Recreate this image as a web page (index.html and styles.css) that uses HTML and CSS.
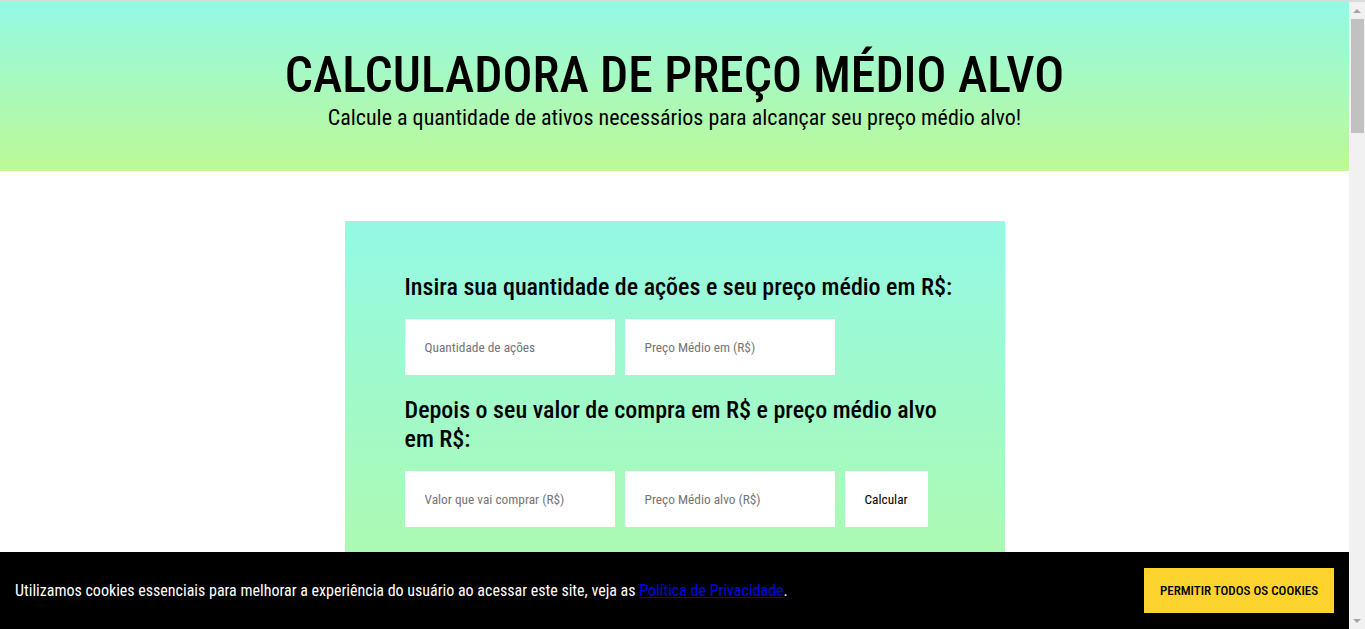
FILE: index.html
```
<!DOCTYPE html>
<html lang="pt-BR">
<head>
<meta charset="utf-8">
<title>Calculadora de Preço Médio Alvo</title>
<link rel="stylesheet" href="styles.css">
</head>
<body>
<div class="page">
  <header class="hero">
    <h1 class="hero-title">CALCULADORA DE PREÇO MÉDIO ALVO</h1>
    <p class="hero-sub">Calcule a quantidade de ativos necessários para alcançar seu preço médio alvo!</p>
  </header>
  <main class="main">
    <section class="card">
      <h2 class="card-heading">Insira sua quantidade de ações e seu preço médio em R$:</h2>
      <div class="field-row">
        <input class="field" type="text" placeholder="Quantidade de ações">
        <input class="field" type="text" placeholder="Preço Médio em (R$)">
      </div>
      <h2 class="card-heading">Depois o seu valor de compra em R$ e preço médio alvo em R$:</h2>
      <div class="field-row">
        <input class="field" type="text" placeholder="Valor que vai comprar (R$)">
        <input class="field" type="text" placeholder="Preço Médio alvo (R$)">
        <button class="calc-btn" type="button">Calcular</button>
      </div>
      <div class="result"></div>
    </section>
  </main>
</div>
<div class="cookie-bar">
  <p class="cookie-text">Utilizamos cookies essenciais para melhorar a experiência do usuário ao acessar este site, veja as <a href="#" class="cookie-link">Política de Privacidade</a>.</p>
  <button class="cookie-btn" type="button">PERMITIR TODOS OS COOKIES</button>
</div>
<div class="scrollbar" aria-hidden="true">
  <div class="sb-arrow sb-up"></div>
  <div class="sb-track"><div class="sb-thumb"></div></div>
  <div class="sb-arrow sb-down"></div>
</div>
</body>
</html>
```
FILE: styles.css
```
html, body {
  margin: 0;
  padding: 0;
}
body {
  font-family: "Roboto Condensed", Roboto, "Liberation Sans", sans-serif;
  font-stretch: condensed;
  background: #ffffff;
  color: #000;
  border-top: 2px solid #dadada;
}
.page {
  margin-right: 16px;
}
.hero {
  height: 169px;
  box-sizing: border-box;
  padding-top: 44px;
  background: linear-gradient(180deg, #94f9e4 0%, #bdf996 100%);
  text-align: center;
}
.hero-title {
  margin: 0;
  font-size: 49.7px;
  font-weight: 500;
  line-height: 58px;
  letter-spacing: 0;
}
.hero-sub {
  margin: 0;
  font-size: 22px;
  line-height: 28px;
}
.main {
  padding: 50px 0 300px;
  display: flex;
  justify-content: center;
}
.card {
  width: 660px;
  box-sizing: border-box;
  padding: 52px 50px 120px 60px;
  background: linear-gradient(180deg, #94f9e4 0%, #b8f99c 100%);
}
.card-heading {
  margin: 0 0 17px;
  font-size: 24px;
  font-weight: 500;
  line-height: 29px;
}
.field-row {
  display: flex;
  gap: 10px;
  margin-bottom: 21px;
}
.field {
  width: 210px;
  height: 56px;
  box-sizing: border-box;
  border: 0;
  padding: 0 20px;
  background: #fff;
  font-family: inherit;
  font-stretch: condensed;
  font-size: 13.333px;
  color: #333;
  outline: none;
}
.field::placeholder {
  color: #757575;
}
.calc-btn {
  height: 56px;
  padding: 0 20px;
  border: 0;
  background: #fff;
  font-family: inherit;
  font-stretch: condensed;
  font-size: 13.333px;
  color: #000;
}
.result {
  height: 40px;
}
.cookie-bar {
  position: fixed;
  left: 0;
  right: 16px;
  bottom: 0;
  height: 77px;
  background: #000;
  display: flex;
  align-items: center;
  justify-content: space-between;
  padding: 0 15px 0 15px;
}
.cookie-text {
  margin: 0;
  color: #fff;
  font-size: 16px;
}
.cookie-link {
  color: #0000ee;
}
.cookie-btn {
  width: 190px;
  height: 45px;
  border: 0;
  background: #fdd42e;
  color: #000;
  font-family: inherit;
  font-stretch: condensed;
  font-weight: 500;
  font-size: 13px;
}
.scrollbar {
  position: fixed;
  top: 2px;
  right: 0;
  bottom: 0;
  width: 16px;
  background: #f1f1f1;
  display: flex;
  flex-direction: column;
}
.sb-arrow {
  height: 17px;
  display: flex;
  align-items: center;
  justify-content: center;
}
.sb-up::before {
  content: "";
  border-left: 4px solid transparent;
  border-right: 4px solid transparent;
  border-bottom: 4px solid #a3a3a3;
}
.sb-down::before {
  content: "";
  border-left: 4px solid transparent;
  border-right: 4px solid transparent;
  border-top: 4px solid #a3a3a3;
}
.sb-track {
  flex: 1;
  padding: 0 1px 0 2px;
}
.sb-thumb {
  height: 114px;
  background: #c1c1c1;
}
```
